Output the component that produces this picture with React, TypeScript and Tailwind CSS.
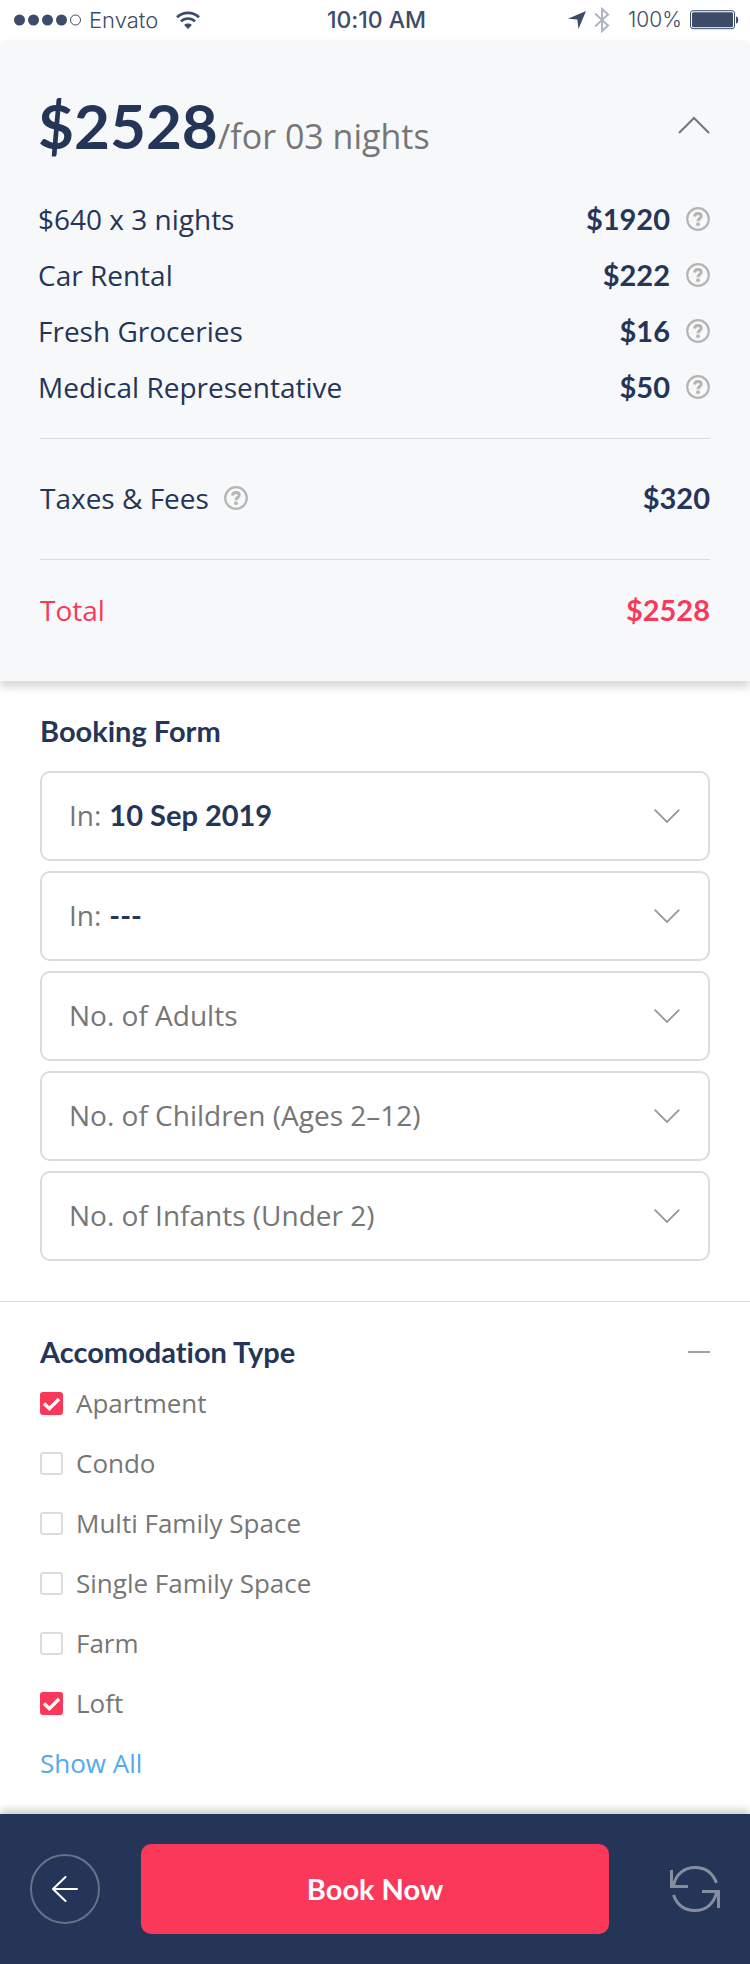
import { useState } from 'react';

const charges = [
  { label: '$640 x 3 nights', amount: '$1920' },
  { label: 'Car Rental', amount: '$222' },
  { label: 'Fresh Groceries', amount: '$16' },
  { label: 'Medical Representative', amount: '$50' },
];

const fields = [
  { id: 'check-in', prefix: 'In:', name: 'Check in date', options: ['10 Sep 2019', '11 Sep 2019', '12 Sep 2019'] },
  { id: 'check-out', prefix: 'In:', name: 'Check out date', options: ['---', '13 Sep 2019', '14 Sep 2019'] },
  { id: 'adults', name: 'Adults', options: ['No. of Adults', '1', '2', '3', '4'] },
  { id: 'children', name: 'Children', options: ['No. of Children (Ages 2–12)', '0', '1', '2', '3'] },
  { id: 'infants', name: 'Infants', options: ['No. of Infants (Under 2)', '0', '1', '2'] },
];

const types = [
  { label: 'Apartment', checked: true },
  { label: 'Condo', checked: false },
  { label: 'Multi Family Space', checked: false },
  { label: 'Single Family Space', checked: false },
  { label: 'Farm', checked: false },
  { label: 'Loft', checked: true },
];

function HelpButton({ topic }: { topic: string }) {
  return (
    <button type="button" aria-label={`About ${topic}`} className="shrink-0 text-[#b5b5b5]">
      <svg width="24" height="24" viewBox="0 0 24 24" fill="none" stroke="currentColor" className="block">
        <circle cx="12" cy="12" r="10.8" strokeWidth="2.2" />
        <path d="M8.4 9.6C8.8 7.4 10.2 6.6 12 6.6c2 0 3.2 1 3.2 2.6 0 2.4-3.200 2.200-3.200 5" strokeWidth="3" />
        <circle cx="12" cy="17.200" r="1.900" fill="currentColor" stroke="none" />
      </svg>
    </button>
  );
}

function StatusBar() {
  return (
    <div className="grid h-10 grid-cols-[1fr_auto_1fr] items-center bg-white pr-[11px] pl-3.5 font-['Inter',sans-serif] text-[#3d4c69]">
      <div className="flex items-center">
        <svg width="68" height="12" viewBox="0 0 68 12" fill="currentColor">
          <circle cx="5.5" cy="6" r="5.5" />
          <circle cx="19.5" cy="6" r="5.5" />
          <circle cx="33.5" cy="6" r="5.5" />
          <circle cx="47.5" cy="6" r="5.5" />
          <circle cx="61.5" cy="6" r="5" fill="none" stroke="currentColor" strokeWidth="1" />
        </svg>
        <span className="ml-[7px] text-[22px] font-light">Envato</span>
        <svg width="24" height="18" viewBox="0 0 24 18" fill="none" stroke="currentColor" strokeWidth="2.6" className="ml-[18px]">
          <path d="M1 6.2C7 .4 17 .4 23 6.2" />
          <path d="M5 10.4c4-3.9 10-3.9 14 0" />
          <path d="M12 18l-3.900-4c2.300-1.900 5.500-1.900 7.800 0z" fill="currentColor" stroke="none" />
        </svg>
      </div>
      <span className="text-[23px] font-medium">10:10 AM</span>
      <div className="flex items-center justify-end">
        <svg width="18" height="18" viewBox="0 0 18 18" fill="currentColor" className="mr-2">
          <path d="M18 0L10.5 18 9.3 8.6 0 7.7z" />
        </svg>
        <svg width="16" height="26" viewBox="0 0 16 26" fill="none" stroke="#aeb5c2" strokeWidth="2" className="mr-[18px]">
          <path d="M1 6.5l13 12L8 24V2l6 5.5-13 12" />
        </svg>
        <span className="text-[21px] font-light">100%</span>
        <svg width="49" height="20" viewBox="0 0 49 20" fill="currentColor" className="ml-2">
          <rect x=".5" y=".7" width="44" height="18" rx="2.5" fill="none" stroke="currentColor" strokeWidth="1" />
          <rect x="2" y="2.2" width="41" height="15" rx="1.5" />
          <path d="M46 6.5c3 0 3 7 0 7z" />
        </svg>
      </div>
    </div>
  );
}

export default function App() {
  const [open, setOpen] = useState(true);

  return (
    <div className="flex min-h-screen flex-col bg-white font-['Open_Sans',sans-serif] text-[#767676] [font-variant-ligatures:none]">
      <StatusBar />

      <section className="rounded-t-lg bg-[#f7f8fa] px-10 pt-[47px] shadow-[0_6px_8px_0_rgba(0,0,0,0.16)]">
        <div className="-ml-0.5">
          <div className="flex h-[76px] items-center justify-between">
            <h1 className="flex items-baseline">
              <span className="font-['Lato',sans-serif] text-[62px] leading-[76px] font-bold text-[#253558]">$2528</span>
              <span className="text-[34px]">/for 03 nights</span>
            </h1>
            <button type="button" aria-label="Toggle price details" aria-expanded={open} onClick={() => setOpen(!open)}>
              <svg width="32" height="18" viewBox="0 0 32 18" fill="none" stroke="#767676" strokeWidth="2" className="block">
                <path d="M1 17L16 2l15 15" />
              </svg>
            </button>
          </div>

          <dl className="mt-7 pb-[23px] text-[28px] text-[#253558]">
            {charges.map((c) => (
              <div key={c.label} className="flex h-14 items-center">
                <dt className="flex-1">{c.label}</dt>
                <dd className="flex items-center gap-4 font-['Lato',sans-serif] text-[29px] font-bold">
                  {c.amount}
                  <HelpButton topic={c.label} />
                </dd>
              </div>
            ))}
          </dl>
        </div>

        <dl className="text-[28px] text-[#253558]">
          <div className="flex h-[121px] items-center justify-between border-t border-[#d9dbde] pb-0.5">
            <dt className="flex items-center gap-[15px]">
              Taxes &amp; Fees
              <HelpButton topic="Taxes & Fees" />
            </dt>
            <dd className="font-['Lato',sans-serif] text-[29px] font-bold">$320</dd>
          </div>
          <div className="border-t border-[#d9dbde] pb-[22px] text-[#fa3859]">
            <div className="flex h-[99px] items-center justify-between">
              <dt>Total</dt>
              <dd className="font-['Lato',sans-serif] text-[29px] font-bold">$2528</dd>
            </div>
          </div>
        </dl>
      </section>

      <form className="border-b border-[#dcdcdc] px-10 pt-8 pb-10">
        <h2 className="mb-[22px] font-['Lato',sans-serif] text-[29px] leading-9 font-bold text-[#253558]">Booking Form</h2>
        <div className="flex flex-col gap-2.5">
          {fields.map((f) => (
            <div key={f.id} className="relative flex h-[90px] items-center rounded-[10px] border-2 border-[#dcdcdc] pb-0.5 pl-[27px] text-[28px]">
              {f.prefix && (
                <label htmlFor={f.id} className="mr-2">
                  {f.prefix}
                </label>
              )}
              <select
                id={f.id}
                aria-label={f.name}
                className={
                  f.prefix
                    ? "h-full min-w-0 flex-1 appearance-none bg-transparent pr-16 font-['Lato',sans-serif] text-[29px] font-bold text-[#253558] outline-none"
                    : 'h-full min-w-0 flex-1 appearance-none bg-transparent pr-16 outline-none'
                }
              >
                {f.options.map((o) => (
                  <option key={o}>{o}</option>
                ))}
              </select>
              <svg width="26" height="14" viewBox="0 0 26 14" fill="none" stroke="#999" strokeWidth="1.8" className="pointer-events-none absolute inset-y-0 right-7 my-auto">
                <path d="M.7.7L13 13 25.3.7" />
              </svg>
            </div>
          ))}
        </div>
      </form>

      <fieldset className="px-10 pt-8 pb-[21px]">
        <div className="mb-[3px] flex items-center justify-between">
          <h2 className="font-['Lato',sans-serif] text-[29px] leading-9 font-bold text-[#253558]">Accomodation Type</h2>
          <button type="button" aria-label="Collapse accomodation type" className="flex h-9 items-center">
            <svg width="22" height="2" viewBox="0 0 22 2" className="block">
              <path d="M0 1h22" stroke="#a0a0a0" strokeWidth="2" />
            </svg>
          </button>
        </div>
        {types.map((t) => (
          <label key={t.label} className="flex h-15 items-center text-[26px]">
            <span className="relative mr-[13px] flex size-[23px]">
              <input
                type="checkbox"
                defaultChecked={t.checked}
                className="peer size-full appearance-none rounded-[3px] border-2 border-[#dcdcdc] checked:border-[#fa3859] checked:bg-[#fa3859]"
              />
              <svg viewBox="0 0 23 23" fill="none" stroke="#fff" strokeWidth="3.4" className="pointer-events-none absolute inset-0 hidden peer-checked:block">
                <path d="M4 11.5l5.4 5.2L19 7" />
              </svg>
            </span>
            {t.label}
          </label>
        ))}
        <a href="#all-types" className="flex h-15 items-center text-[26px] text-[#54a9eb]">
          Show All
        </a>
      </fieldset>

      <footer className="mt-auto flex h-[150px] items-center bg-[#253558] px-[30px] shadow-[0_-4px_8px_0_rgba(0,0,0,0.2)]">
        <button type="button" aria-label="Back" className="flex size-[70px] shrink-0 items-center justify-center rounded-full border-2 border-[#66728a]">
          <svg width="26" height="26" viewBox="0 0 26 26" fill="none" stroke="#fff" strokeWidth="2" strokeLinecap="round" strokeLinejoin="round">
            <path d="M13.5 1L1 13l12.5 12M1 13h24" />
          </svg>
        </button>
        <button type="button" className="mr-[61px] ml-[41px] h-[90px] flex-1 rounded-[10px] bg-[#fa3859] font-['Lato',sans-serif] text-[29px] font-bold text-white">
          Book Now
        </button>
        <button type="button" aria-label="Reset" className="shrink-0">
          <svg width="50" height="48" viewBox="0 0 50 48" fill="none" stroke="#858d9f" strokeWidth="3" className="block">
            <path d="M1.5 5v16.5H18" />
            <path d="M3.5 20.5C6 9 14.500 2.500 25 2.500c10.500 0 18 6 21.500 15.500" />
            <path d="M48.500 43V26.500H32" />
            <path d="M46.500 27.500C44 39 35.500 45.500 25 45.500c-10.500 0-18-6-21.500-15.500" />
          </svg>
        </button>
      </footer>
    </div>
  );
}
